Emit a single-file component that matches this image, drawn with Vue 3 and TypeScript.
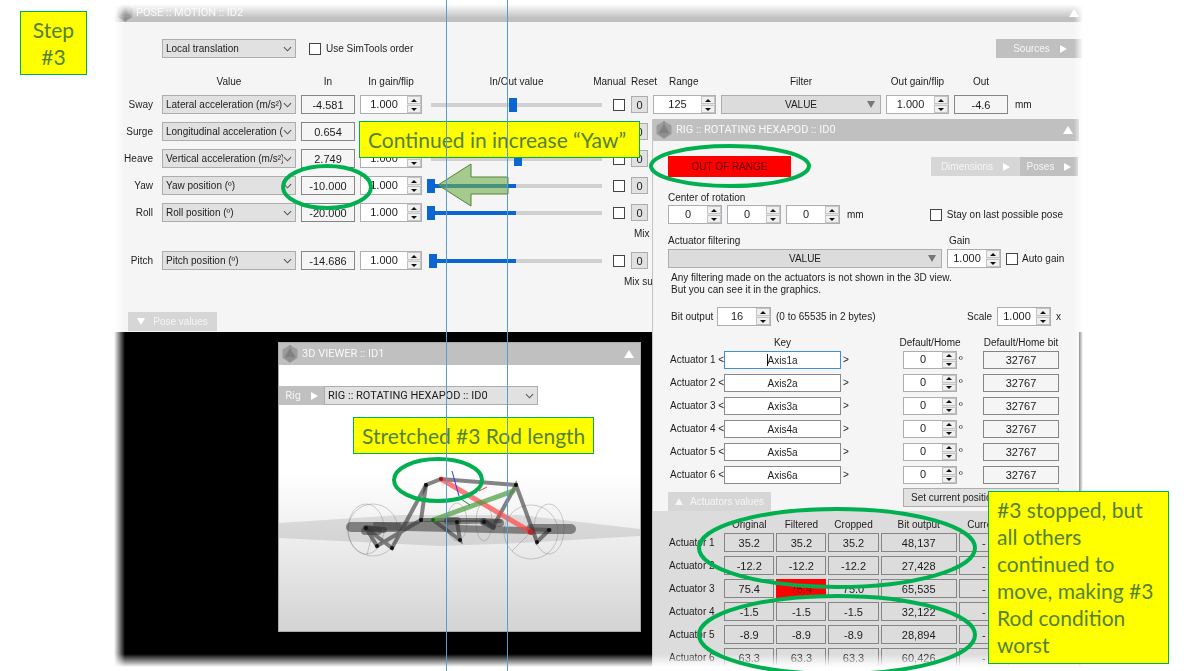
<script setup lang="ts">
import { h, reactive, ref } from 'vue'
import type { FunctionalComponent } from 'vue'

interface Axis {
  name: string
  source: string
  input: string
  gain: string
  level: number
  manual: boolean
  mix?: string
}

const Spinner: FunctionalComponent<{ value: string; label: string }> = (props) =>
  h('span', { class: 'spin' }, [
    h('input', { type: 'text', value: props.value, 'aria-label': props.label }),
    h('span', { class: 'spin-buttons' }, [
      h('button', { type: 'button', 'aria-label': `${props.label} up` }, [h('i', { class: 'up' })]),
      h('button', { type: 'button', 'aria-label': `${props.label} down` }, [h('i', { class: 'down' })]),
    ]),
  ])
Spinner.props = ['value', 'label']

const Gem: FunctionalComponent = () =>
  h('svg', { class: 'gem', viewBox: '0 0 16 18', 'aria-hidden': 'true' }, [
    h('path', { d: 'M8 0 15.500 4.500V13L8 18 .5 13V4.500Z', fill: '#9c9c9c' }),
    h('path', { d: 'M8 3 13.500 12.500H2.500Z', fill: '#808080' }),
    h('path', { d: 'M2.500 12.500H13.500L8 17Z', fill: '#8e8e8e' }),
    h('path', { d: 'M8 0V3L2.500 12.500M8 3 13.500 12.500', stroke: '#8a8a8a', fill: 'none' }),
  ])

const Chevron: FunctionalComponent = () =>
  h('svg', { class: 'chevron', viewBox: '0 0 10 6', 'aria-hidden': 'true' }, [
    h('path', { d: 'M1 1 5 5 9 1', stroke: '#555', fill: 'none', 'stroke-width': 1.2 }),
  ])

const axes = reactive<Axis[]>([
  { name: 'Sway', source: 'Lateral acceleration (m/s²)', input: '-4.581', gain: '1.000', level: 48, manual: false },
  { name: 'Surge', source: 'Longitudinal acceleration (m/s²)', input: '0.654', gain: '1.000', level: 50, manual: false },
  { name: 'Heave', source: 'Vertical acceleration (m/s²)', input: '2.749', gain: '1.000', level: 51, manual: false },
  { name: 'Yaw', source: 'Yaw position (º)', input: '-10.000', gain: '1.000', level: 0, manual: false },
  { name: 'Roll', source: 'Roll position (º)', input: '-20.000', gain: '1.000', level: 0, manual: false, mix: 'Mix sway' },
  { name: 'Pitch', source: 'Pitch position (º)', input: '-14.686', gain: '1.000', level: 1, manual: false, mix: 'Mix surge' },
])

const fill = (level: number) => ({
  '--from': `${Math.min(level, 50)}%`,
  '--to': `${Math.max(level, 50)}%`,
})

const keys = ref(['Axis1a', 'Axis2a', 'Axis3a', 'Axis4a', 'Axis5a', 'Axis6a'])

const outputs = [
  ['35.2', '35.2', '35.2', '48,137', '-'],
  ['-12.2', '-12.2', '-12.2', '27,428', '-'],
  ['75.4', '75.4', '75.0', '65,535', '-'],
  ['-1.5', '-1.5', '-1.5', '32,122', '-'],
  ['-8.9', '-8.9', '-8.9', '28,894', '-'],
  ['63.3', '63.3', '63.3', '60,426', '-'],
]
</script>

<template>
  <main class="page">
    <div class="desktop">
      <section class="pose">
        <header class="bar pose-bar"><Gem /><span>POSE :: MOTION :: ID2</span><i class="tri-up"></i></header>
        <div class="tools">
          <span class="pick mode">
            <select aria-label="Translation mode"><option>Local translation</option></select><Chevron />
          </span>
          <label class="tick"><input type="checkbox">Use SimTools order</label>
          <button type="button" class="tag sources">Sources<i class="tri-right"></i></button>
        </div>
        <div class="line heads">
          <span></span><span>Value</span><span>In</span><span>In gain/flip</span><span>In/Out value</span>
          <span class="manual">Manual</span><span class="reset">Reset</span><span class="left">Range</span><span>Filter</span>
          <span>Out gain/flip</span><span>Out</span>
        </div>
        <div class="axes">
          <template v-for="(a, i) in axes" :key="a.name">
            <div class="line">
              <span class="name">{{ a.name }}</span>
              <span class="pick">
                <select :aria-label="a.name + ' source'"><option>{{ a.source }}</option></select><Chevron />
              </span>
              <output class="box">{{ a.input }}</output>
              <Spinner :value="a.gain" :label="a.name + ' gain'" />
              <input v-model="a.level" class="slider" type="range" min="0" max="100" :style="fill(a.level)" :aria-label="a.name + ' value'">
              <input v-model="a.manual" class="check" type="checkbox" :aria-label="a.name + ' manual'">
              <button type="button" class="zero">0</button>
              <template v-if="i === 0">
                <Spinner value="125" label="Sway range" />
                <button type="button" class="filter">VALUE<i class="tri-down"></i></button>
                <Spinner value="1.000" label="Sway out gain" />
                <output class="box">-4.6</output>
                <span class="unit">mm</span>
              </template>
            </div>
            <div v-if="a.mix" class="line mix"><span :class="a.name.toLowerCase()">{{ a.mix }}</span></div>
          </template>
        </div>
        <button type="button" class="tag pale pose-tab"><i class="tri-down white"></i>Pose values</button>
      </section>

      <section class="viewer">
        <header class="bar"><Gem /><span>3D VIEWER :: ID1</span><i class="tri-up"></i></header>
        <div class="rig-pick">
          <button type="button" class="tag">Rig<i class="tri-right"></i></button>
          <span class="pick">
            <select aria-label="Rig"><option>RIG :: ROTATING HEXAPOD :: ID0</option></select><Chevron />
          </span>
        </div>
        <svg class="scene" viewBox="279 410 361 221" preserveAspectRatio="xMidYMid slice" aria-label="Rig model">
          <path d="M279 523 400 515H520L640 529V536L520 543 440 546 279 538Z" fill="#000" fill-opacity=".1" />
          <g fill="none" stroke="#777" stroke-opacity=".45" stroke-width=".8">
            <ellipse cx="373" cy="530" rx="25" ry="26" />
            <ellipse cx="366" cy="529" rx="18" ry="25" />
            <ellipse cx="457" cy="522" rx="10" ry="19" />
            <ellipse cx="484" cy="522" rx="8" ry="19" />
            <ellipse cx="531" cy="532" rx="27" ry="27" />
            <ellipse cx="549" cy="529" rx="15" ry="25" />
            <path d="M531 532 512 551M373 530 367 555" />
          </g>
          <g fill="none" stroke="#444" stroke-linecap="round" stroke-opacity=".6">
            <path d="M351 527H397M531 529H571" stroke-width="10" />
            <path d="M365 531 378 531M448 521H457M484 522 500 523" stroke-width="8" />
            <path d="M366 528 530 532M375 524 550 530M400 524 500 521" stroke-width="4" />
          </g>
          <g fill="none" stroke="#333" stroke-linecap="round" stroke-opacity=".6" stroke-width="4">
            <path d="M421 520 426 485 441 479 516 485" />
            <path d="M426 485 392 548 366 528 377 546 421 520" />
            <path d="M433 520 460 540 457 522M421 520H484L493 527 516 485 537 542 549 530" />
            <path d="M366 528 384 530M484 522 493 527" stroke-width="6" />
          </g>
          <path d="M441 479 531 532" stroke="#f44" stroke-opacity=".7" stroke-width="5" stroke-linecap="round" />
          <path d="M433 520 513 491" stroke="#4a9a3c" stroke-opacity=".7" stroke-width="5" stroke-linecap="round" />
          <path d="M452 471 459 496" stroke="#33e" />
          <path d="M487 487 479 491" stroke="#f33" />
          <path d="M461 499 470 505" stroke="#182" />
          <g fill="#111">
            <circle cx="426" cy="485" r="2" /><circle cx="516" cy="485" r="2" /><circle cx="421" cy="520" r="2" />
            <circle cx="366" cy="528" r="2" /><circle cx="377" cy="546" r="2" /><circle cx="392" cy="548" r="2" />
            <circle cx="457" cy="522" r="2" /><circle cx="460" cy="540" r="2" /><circle cx="484" cy="522" r="2" />
            <circle cx="537" cy="542" r="2" /><circle cx="549" cy="530" r="2" />
          </g>
          <circle cx="441" cy="479" r="2" fill="#822" />
          <circle cx="433" cy="520" r="2" fill="#161" />
          <circle cx="531" cy="532" r="3" fill="#a22" fill-opacity=".8" />
        </svg>
      </section>

      <section class="rig">
        <header class="bar"><Gem /><span>RIG :: ROTATING HEXAPOD :: ID0</span><i class="tri-up"></i></header>
        <div class="row status">
          <strong>OUT OF RANGE</strong>
          <button type="button" class="tag pale dims">Dimensions<i class="tri-right"></i></button>
          <button type="button" class="tag poses">Poses<i class="tri-right"></i></button>
        </div>
        <p class="caption center-title">Center of rotation</p>
        <div class="row">
          <Spinner v-for="c in ['x', 'y', 'z']" :key="c" class="w54" value="0" :label="'Center ' + c" />
          <span class="unit">mm</span>
          <label class="tick push">
            <input type="checkbox">Stay on last possible pose
          </label>
        </div>
        <div class="row caption filter-title"><span>Actuator filtering</span><span class="gain">Gain</span></div>
        <div class="row">
          <button type="button" class="filter wide">VALUE<i class="tri-down"></i></button>
          <Spinner class="w54" value="1.000" label="Filter gain" />
          <label class="tick auto"><input type="checkbox">Auto gain</label>
        </div>
        <p class="note">Any filtering made on the actuators is not shown in the 3D view.<br>But you can see it in the graphics.</p>
        <div class="row bits">
          <span class="bit-label">Bit output</span><Spinner class="w54" value="16" label="Bit output" /><span>(0 to 65535 in 2 bytes)</span>
          <span class="push">Scale</span><Spinner class="w54" value="1.000" label="Scale" /><span class="times">x</span>
        </div>
        <div class="keys key-heads">
          <span></span><span>Key</span><span></span><span>Default/Home</span><span></span><span>Default/Home bit</span>
        </div>
        <div class="key-list">
          <div v-for="(k, i) in keys" :key="i" class="keys">
            <label :for="'key' + i">Actuator {{ i + 1 }} &lt;</label>
            <span class="key-cell"><input :id="'key' + i" v-model="keys[i]" :class="{ active: i === 0 }" type="text"><i v-if="i === 0" class="caret"></i></span>
            <span class="gt">&gt;</span>
            <Spinner value="0" :label="'Default ' + (i + 1)" />
            <span class="deg">º</span>
            <output class="box">32767</output>
          </div>
        </div>
        <div class="row tabs">
          <button type="button" class="tag pale"><i class="tri-up small"></i>Actuators values</button>
          <button type="button" class="set">Set current position</button>
        </div>
        <div class="values">
          <table>
            <thead>
              <tr><th></th><th>Original</th><th>Filtered</th><th>Cropped</th><th class="bit">Bit output</th><th>Current</th></tr>
            </thead>
            <tbody>
              <tr v-for="(r, i) in outputs" :key="i">
                <th scope="row">Actuator {{ i + 1 }}</th>
                <td v-for="(v, j) in r" :key="j"><span class="box" :class="{ alarm: i === 2 && j === 1 }">{{ v }}</span></td>
              </tr>
            </tbody>
          </table>
        </div>
      </section>
    </div>

    <p class="memo step">Step<br>#3</p>
    <p class="memo yaw">Continued in increase “Yaw”</p>
    <p class="memo rod">Stretched #3 Rod length</p>
    <p class="memo stop">#3 stopped, but<br>all others<br>continued to<br>move, making #3<br>Rod condition<br>worst</p>

    <svg class="marks" aria-hidden="true">
      <path d="M438 185 471 164V177H508V194H471V206Z" fill="#70ad47" fill-opacity=".6" stroke="#548235" />
      <g fill="none" stroke="#00b050" stroke-width="4">
        <ellipse cx="327" cy="187" rx="44" ry="21" />
        <ellipse cx="730" cy="166" rx="79" ry="20" />
        <ellipse cx="438" cy="480" rx="44" ry="21" />
        <ellipse cx="837" cy="548" rx="138" ry="39" />
        <ellipse cx="837" cy="635" rx="138" ry="39" />
      </g>
      <path d="M446.500 0V2000M507.500 0V2000" stroke="#5b9bd5" />
    </svg>
  </main>
</template>

<style>
body { margin: 0; background: #fff; }
button, input, select, output { font: inherit; color: inherit; box-sizing: border-box; }
button { padding: 0; margin: 0; border: 0; }
.spin { display: flex; box-sizing: border-box; height: 19px; border: 1px solid #adadb3; background: #fff; }
.spin input { flex: 1; width: 0; min-width: 0; border: 0; padding: 0 0 2px; text-align: center; background: #fff; font-size: 11px; outline: 0; }
.spin-buttons { display: flex; flex-direction: column; width: 14px; background: #e4e4e4; gap: 1px; }
.spin-buttons button { flex: 1; display: flex; align-items: center; justify-content: center; border: 1px solid #c4c4c4; background: #f0f0f0; }
.spin-buttons i { border: 3px solid transparent; }
.spin-buttons .up { border-top: 0; border-bottom-color: #111; }
.spin-buttons .down { border-bottom: 0; border-top-color: #111; }
.gem { width: 16px; height: 18px; flex: none; }
.chevron { position: absolute; right: 4px; top: 7px; width: 9px; height: 6px; pointer-events: none; }
</style>

<style scoped>
.page { position: relative; min-height: 100vh; overflow: hidden; background: #fff; }
.desktop {
  position: relative; height: 671px; margin: 0 108px 0 112px; background: #000; color: #1c1c1c;
  font: 10px/14px "Liberation Sans", Arial, sans-serif;
  -webkit-mask-image: linear-gradient(to right, transparent 2px, #000 13px, #000 calc(100% - 14px), transparent calc(100% - 5px)), linear-gradient(transparent 4px, #000 18px, #000 calc(100% - 17px), transparent calc(100% - 4px));
  -webkit-mask-composite: source-in;
  mask-composite: intersect;
}
p { margin: 0; }
.bar { display: flex; align-items: center; gap: 4px; height: 22px; padding: 0 6px 0 3px; background: #c0c0c0; color: #f8f8f8; font: 11px/14px "Roboto", sans-serif; box-sizing: border-box; }
.bar .tri-up { margin-left: auto; }
.tri-up { border: 5px solid transparent; border-top: 0; border-bottom: 8px solid #fff; }
.tri-up.small { border-width: 0 4px 7px; border-bottom-color: #f5f5f5; }
.tri-right { border: 4px solid transparent; border-right: 0; border-left: 7px solid #fff; }
.tri-down { border: 4px solid transparent; border-bottom: 0; border-top: 7px solid #777; }
.tri-down.white { border-top-color: #fff; }
.tag { display: flex; align-items: center; justify-content: center; gap: 10px; height: 19px; background: #c0c0c0; color: #f5f5f5; }
.tag.pale { background: #d6d6d6; }
.pick { position: relative; display: block; min-width: 0; }
.pick select { display: block; width: 100%; height: 19px; padding: 0 12px 0 3px; border: 1px solid #adadad; border-radius: 0; background: #e1e1e1; appearance: none; }
.box { display: block; height: 19px; border: 1px solid #858585; text-align: center; font-size: 11px; line-height: 18px; box-sizing: border-box; }
.tick { display: flex; align-items: center; gap: 5px; white-space: nowrap; }
.tick input, .check { appearance: none; flex: none; width: 12px; height: 12px; margin: 0; border: 1px solid #444; background: #fff; }
.filter { position: relative; display: flex; align-items: center; justify-content: center; height: 19px; border: 1px solid #adadad; background: #dcdcdc; }
.filter .tri-down { position: absolute; right: 5px; }

.pose { height: 332px; background: #f5f5f5; box-sizing: border-box; }
.pose-bar { padding: 4px 9px 0 5px; gap: 3px; }
.tools { display: flex; align-items: center; margin-top: 17px; padding-left: 50px; }
.mode { width: 134px; margin-right: 13px; }
.sources { margin-left: auto; width: 92px; padding-right: 4px; }
.line { display: grid; grid-template-columns: 45px 134px 54px 62px minmax(60px, 1fr) 15px 17px 63px 160px 63px 54px 75px; gap: 5px; align-items: center; height: 19px; }
.heads { margin-top: 17px; height: 14px; text-align: center; white-space: nowrap; }
.heads span { display: flex; justify-content: center; }
.heads .manual { justify-content: flex-end; }
.heads .reset { justify-content: flex-start; }
.heads .left { justify-content: flex-start; padding-left: 16px; }
.axes { display: grid; row-gap: 8px; margin-top: 6px; }
.name { text-align: right; padding-right: 4px; }
.check { justify-self: center; }
.zero { height: 17px; border: 1px solid #adadad; background: #e1e1e1; font-size: 11px; }
.unit { padding-left: 2px; }
.mix { height: 13px; line-height: 8px; align-items: start; white-space: nowrap; }
.mix span { grid-column: 6 / span 3; }
.mix .roll { padding-left: 23px; }
.mix .pitch { padding-left: 13px; }
.slider { appearance: none; width: 100%; height: 19px; margin: 0; padding: 0; background: transparent; }
.slider::-webkit-slider-runnable-track { height: 14px; background: linear-gradient(to right, #d0d0d0 var(--from), #0a66d0 var(--from), #0a66d0 var(--to), #d0d0d0 var(--to)) center / calc(100% - 8px) 4px no-repeat; }
.slider::-webkit-slider-thumb { appearance: none; width: 8px; height: 14px; border: 0; border-radius: 0; background: #0a66d0; }
.pose-tab { width: 89px; margin: 21px 0 0 16px; gap: 8px; }

.viewer { position: absolute; left: 166px; top: 342px; width: 363px; height: 290px; box-sizing: border-box; display: flex; flex-direction: column; border: 1px solid #aaa; background: linear-gradient(#fff 45%, #e8e8e8 75%, #d3d3d3); }
.viewer .bar { height: 22px; flex: none; }
.rig-pick { display: flex; margin-top: 21px; font: 11px/14px "Roboto", sans-serif; }
.rig-pick .tag { width: 45px; }
.rig-pick .pick { width: 214px; }
.scene { flex: 1; min-height: 0; width: 100%; margin-top: 5px; }

.rig { position: absolute; right: 9px; top: 119px; bottom: 0; width: 427px; box-sizing: border-box; display: flex; flex-direction: column; border-left: 1px solid #c4c4c4; background: #f5f5f5; }
.rig .bar { flex: none; }
.row { display: flex; align-items: center; gap: 5px; padding: 0 16px 0 15px; white-space: nowrap; }
.push { margin-left: auto; }
.w54 { width: 54px; }
.status { margin-top: 15px; padding-right: 1px; gap: 0; }
.status strong { width: 123px; height: 21px; background: #f00; color: #5a0000; font-weight: 400; text-align: center; line-height: 22px; }
.dims { width: 89px; margin-left: auto; }
.poses { width: 58px; }
.caption { line-height: 14px; }
.center-title { margin: 14px 0 0 15px; }
.filter-title { margin: 10px 0 1px; }
.filter-title .gain { margin-left: auto; width: 114px; }
.filter.wide { flex: 1; }
.auto { width: 57px; gap: 4px; }
.note { margin: 4px 0 0 18px; line-height: 12px; }
.bits { margin-top: 11px; padding-left: 18px; }
.bits .bit-label { width: 41px; }
.bits .times { width: 7px; }
.keys { display: grid; grid-template-columns: 52px 117px 58px 54px 22px 76px; column-gap: 2px; align-items: center; padding-left: 17px; height: 18px; white-space: nowrap; }
.key-heads { margin-top: 10px; height: 14px; text-align: center; }
.key-heads span { display: flex; justify-content: center; }
.key-list { display: grid; row-gap: 5px; margin-top: 1px; }
.keys .box, .keys .spin { height: 18px; }
.keys .box { line-height: 17px; }
.key-cell { position: relative; }
.key-cell input { display: block; width: 100%; height: 18px; padding: 0; border: 1px solid #8a8a8a; background: #fff; text-align: center; outline: 0; }
.key-cell .active { border-color: #3c8fdc; }
.caret { position: absolute; left: 43px; top: 3px; width: 1px; height: 12px; background: #111; }
.tabs { margin-top: 4px; align-items: flex-end; }
.tabs .tag { width: 103px; gap: 7px; }
.tabs .set { width: 156px; height: 19px; margin: 0 4px 4px auto; padding-left: 7px; border: 1px solid #adadad; background: #e1e1e1; text-align: left; }
.values { flex: 1; min-height: 0; overflow: hidden; background: #dcdcdc; padding: 7px 0 0 15px; }
table { border-collapse: separate; border-spacing: 0; table-layout: fixed; width: 342px; }
th, td { padding: 0 1px 4px; font-weight: 400; height: 19px; text-align: center; }
thead th { height: 14px; padding: 0 0 1px; white-space: nowrap; }
thead th:first-child { width: 55px; }
thead th { width: 52px; }
thead .bit { width: 78px; }
tbody th { text-align: left; white-space: nowrap; }
.alarm { background: #f00; border-color: #f00; color: #700; }

.memo { position: absolute; box-sizing: border-box; border: 1px solid #00b050; background: #ff0; color: #548235; font: 21px/27px "Lato", sans-serif; white-space: nowrap; padding: 4px 8px; }
.step { left: 20px; top: 11px; width: 67px; height: 64px; text-align: center; }
.yaw { left: 359px; top: 121px; width: 281px; height: 37px; }
.rod { left: 353px; top: 417px; width: 241px; height: 37px; }
.stop { left: 988px; top: 491px; width: 181px; height: 173px; }
.marks { position: absolute; inset: 0; width: 100%; height: 100%; pointer-events: none; }
</style>
